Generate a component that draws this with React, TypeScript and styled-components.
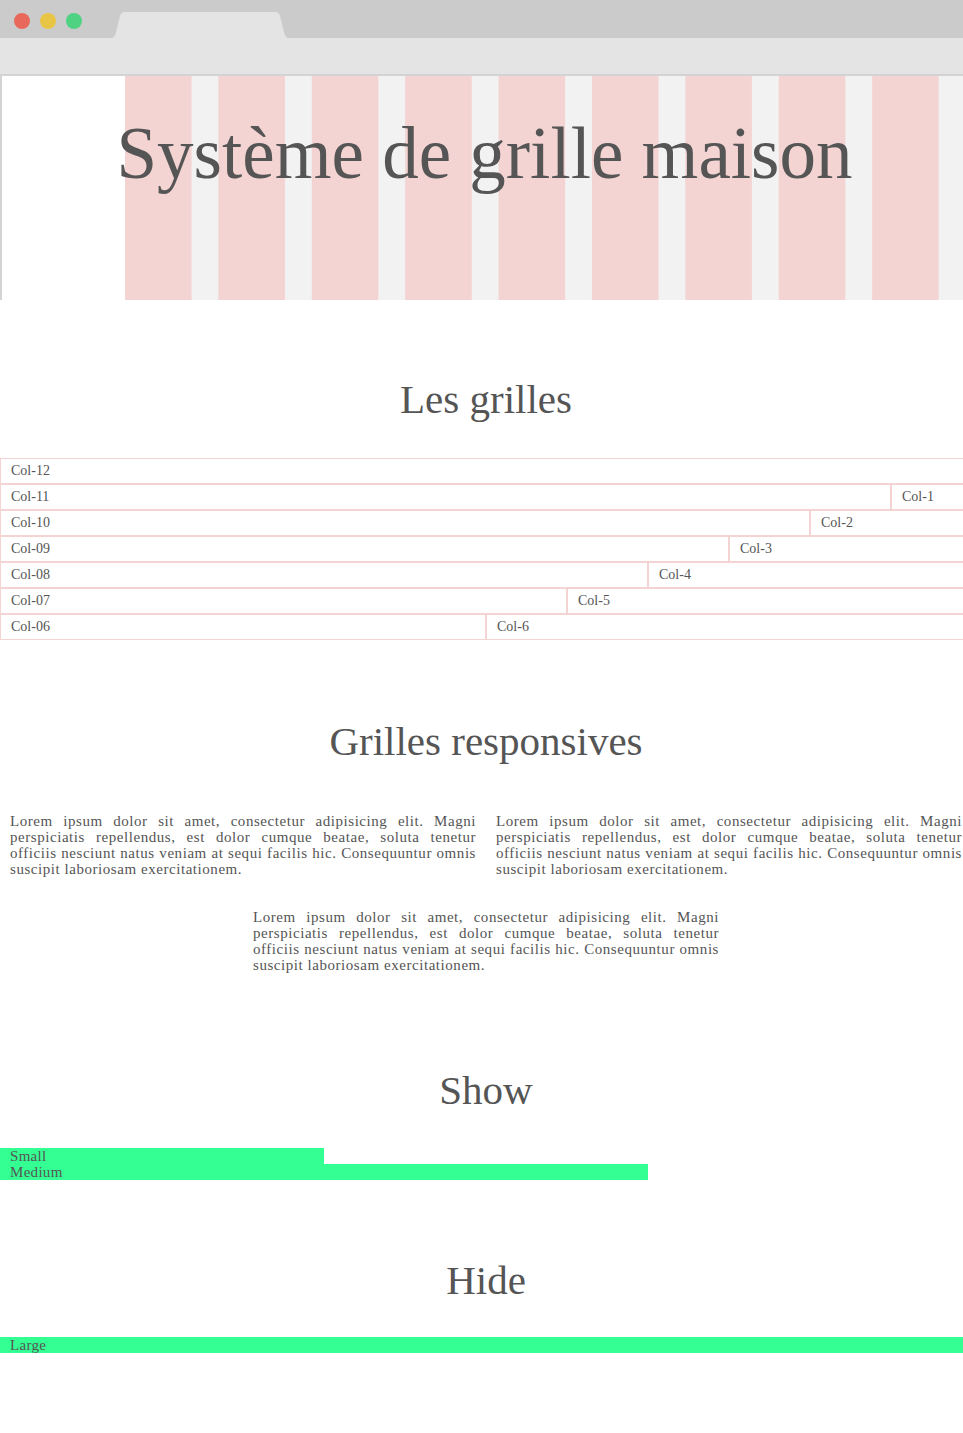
import React from "react";
import styled, { createGlobalStyle } from "styled-components";

const COL = 81;

const GlobalStyle = createGlobalStyle`
  html, body {
    margin: 0;
    padding: 0;
    background: #fff;
    overflow-x: hidden;
  }
  body {
    font-family: "Liberation Serif", "Times New Roman", serif;
    color: #555;
  }
  *, *::before, *::after { box-sizing: border-box; }
`;

const Page = styled.div`
  width: 963px;
  overflow: hidden;
  padding-bottom: 80px;
`;

/* ---------- browser mock header ---------- */
const TitleBar = styled.div`
  height: 38px;
  background: #cbcbcb;
  display: flex;
  align-items: flex-start;
  padding-left: 14px;
`;

const Dots = styled.div`
  display: flex;
  gap: 10px;
  margin-top: 13px;
`;

const Dot = styled.span<{ $c: string }>`
  width: 16px;
  height: 16px;
  border-radius: 50%;
  background: ${(p) => p.$c};
`;

const TabShape = styled.svg`
  display: block;
  margin-left: 28px;
  margin-top: 12px;
`;

const Toolbar = styled.div`
  height: 38px;
  background: #e4e4e4;
  border-bottom: 2px solid #d3d3d3;
`;

const Hero = styled.header`
  height: 224px;
  border-left: 2px solid #d3d3d3;
  background-color: #fff;
  background-image: linear-gradient(to right, #fff 0 123px, transparent 123px),
    linear-gradient(to right, #f4d3d3 0 67px, #f2f2f2 67px 100%);
  background-size: 100% 100%, 93.4px 100%;
  background-position: 0 0, 123px 0;
  background-repeat: no-repeat, repeat-x;
  display: flex;
  justify-content: center;
  padding-top: 41px;
  padding-left: 4px;
`;

const HeroTitle = styled.h1`
  margin: 0;
  font-weight: 400;
  font-size: 73px;
  line-height: 73px;
  color: #555;
  white-space: nowrap;
`;

/* ---------- sections ---------- */
const Section = styled.section<{ $top: number; $bottom?: number }>`
  width: ${COL * 12}px;
  padding-top: ${(p) => p.$top}px;
  padding-bottom: ${(p) => p.$bottom ?? 0}px;
`;

const Heading = styled.h2<{ $gap: number }>`
  margin: 0 0 ${(p) => p.$gap}px;
  height: 50px;
  font-weight: 400;
  font-size: 41px;
  line-height: 50px;
  text-align: center;
  color: #555;
`;

/* ---------- grid demo ---------- */
const GridRow = styled.div`
  display: flex;
  width: ${COL * 12}px;
`;

const Cell = styled.div<{ $span: number }>`
  width: ${(p) => p.$span * COL}px;
  height: 26px;
  border: 1px solid #f4d3d3;
  padding: 0 10px;
  font-size: 14px;
  line-height: 24px;
  color: #555;
`;

/* ---------- responsive demo ---------- */
const TextRows = styled.div`
  display: flex;
  flex-direction: column;
  gap: 32px;
`;

const TextRow = styled.div`
  display: flex;
  width: ${COL * 12}px;
`;

const TextCol = styled.div<{ $span: number; $offset?: number }>`
  width: ${(p) => p.$span * COL}px;
  margin-left: ${(p) => (p.$offset ?? 0) * COL}px;
  padding: 0 10px;
`;

const Para = styled.p`
  margin: 0;
  font-size: 15px;
  line-height: 16px;
  letter-spacing: 0.55px;
  text-align: justify;
  color: #555;
`;

/* ---------- show / hide ---------- */
const Bar = styled.div<{ $span: number }>`
  width: ${(p) => p.$span * COL}px;
  height: 16px;
  background: #33ff93;
  padding-left: 10px;
  font-size: 15px;
  line-height: 16px;
  letter-spacing: 0.3px;
  color: #555;
`;

const lorem =
  "Lorem ipsum dolor sit amet, consectetur adipisicing elit. Magni perspiciatis repellendus, est dolor cumque beatae, soluta tenetur officiis nesciunt natus veniam at sequi facilis hic. Consequuntur omnis suscipit laboriosam exercitationem.";

const gridRows: [string, number, string | null, number][] = [
  ["Col-12", 12, null, 0],
  ["Col-11", 11, "Col-1", 1],
  ["Col-10", 10, "Col-2", 2],
  ["Col-09", 9, "Col-3", 3],
  ["Col-08", 8, "Col-4", 4],
  ["Col-07", 7, "Col-5", 5],
  ["Col-06", 6, "Col-6", 6],
];

export default function App() {
  return (
    <Page>
      <GlobalStyle />
      <TitleBar>
        <Dots>
          <Dot $c="#e8695c" />
          <Dot $c="#e9c545" />
          <Dot $c="#50d283" />
        </Dots>
        <TabShape width="180" height="26" viewBox="0 0 180 26">
          <path
            d="M0 26 C4 26 5 24 6 20 L10 4 C11 1 12 0 16 0 L164 0 C168 0 169 1 170 4 L174 20 C175 24 176 26 180 26 Z"
            fill="#e4e4e4"
          />
        </TabShape>
      </TitleBar>
      <Toolbar />
      <Hero>
        <HeroTitle>Système de grille maison</HeroTitle>
      </Hero>

      <Section $top={74}>
        <Heading $gap={34}>Les grilles</Heading>
        {gridRows.map(([a, sa, b, sb]) => (
          <GridRow key={a}>
            <Cell $span={sa}>{a}</Cell>
            {b && <Cell $span={sb}>{b}</Cell>}
          </GridRow>
        ))}
      </Section>

      <Section $top={76} $bottom={17}>
        <Heading $gap={47}>Grilles responsives</Heading>
        <TextRows>
          <TextRow>
            <TextCol $span={6}>
              <Para>{lorem}</Para>
            </TextCol>
            <TextCol $span={6}>
              <Para>{lorem}</Para>
            </TextCol>
          </TextRow>
          <TextRow>
            <TextCol $span={6} $offset={3}>
              <Para>{lorem}</Para>
            </TextCol>
          </TextRow>
        </TextRows>
      </Section>

      <Section $top={75}>
        <Heading $gap={33}>Show</Heading>
        <Bar $span={4}>Small</Bar>
        <Bar $span={8}>Medium</Bar>
      </Section>

      <Section $top={75}>
        <Heading $gap={32}>Hide</Heading>
        <Bar $span={12}>Large</Bar>
      </Section>
    </Page>
  );
}
